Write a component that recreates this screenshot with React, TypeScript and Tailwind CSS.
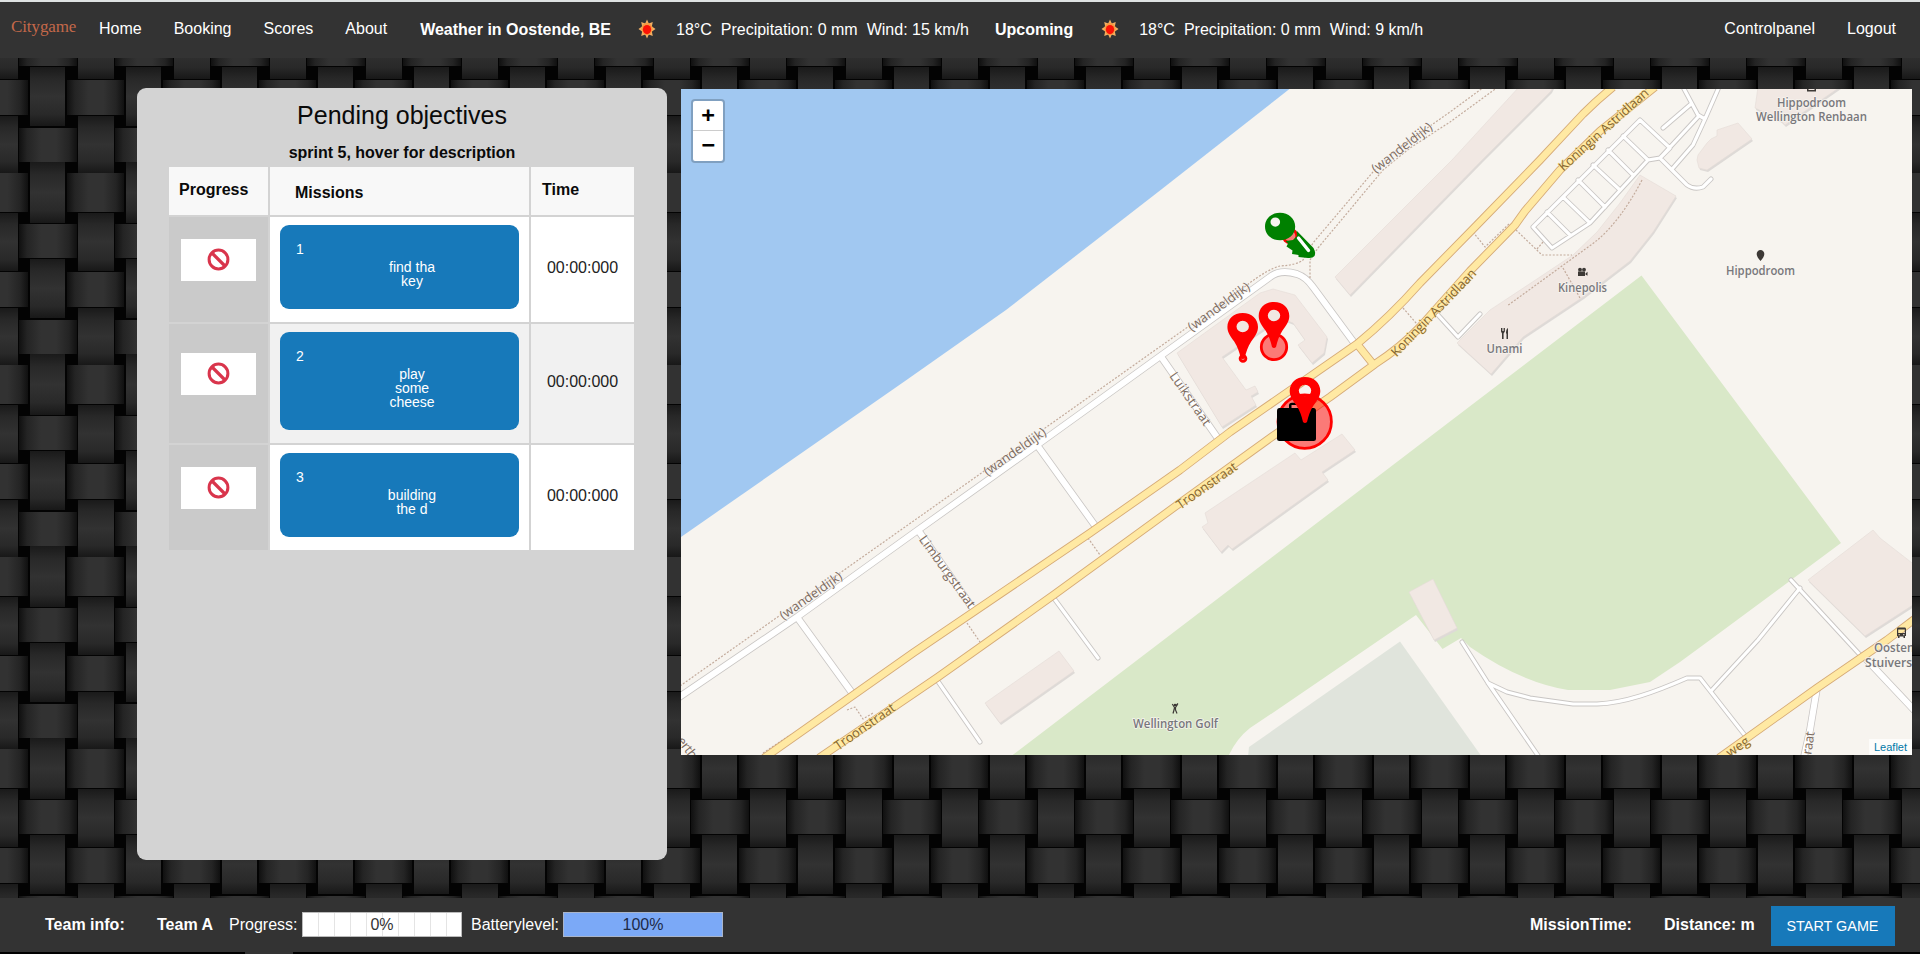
import React from "react";

const SANS = "font-['Liberation_Sans',Arial,sans-serif]";

function WeaveBackground() {
  return (
    <svg className="absolute inset-0" width="1920" height="954">
      <defs>
        <linearGradient id="hs" x1="0" x2="1" y1="0" y2="0">
          <stop offset="0" stopColor="#101010" />
          <stop offset="0.14" stopColor="#242424" />
          <stop offset="0.38" stopColor="#323232" />
          <stop offset="0.64" stopColor="#323232" />
          <stop offset="0.86" stopColor="#242424" />
          <stop offset="1" stopColor="#101010" />
        </linearGradient>
        <linearGradient id="vs" x1="0" x2="0" y1="0" y2="1">
          <stop offset="0" stopColor="#1a1a1a" />
          <stop offset="0.2" stopColor="#282828" />
          <stop offset="0.5" stopColor="#323232" />
          <stop offset="0.8" stopColor="#292929" />
          <stop offset="1" stopColor="#181818" />
        </linearGradient>
        <pattern id="weave" width="96" height="192" patternUnits="userSpaceOnUse">
          <rect width="96" height="192" fill="#030303" />
          <rect x="30" y="-30" width="35" height="61" fill="url(#vs)" />
          <rect x="30" y="67" width="35" height="59" fill="url(#vs)" />
          <rect x="30" y="162" width="35" height="61" fill="url(#vs)" />
          <rect x="78" y="21" width="36" height="58" fill="url(#vs)" />
          <rect x="-18" y="21" width="36" height="58" fill="url(#vs)" />
          <rect x="78" y="116" width="36" height="57" fill="url(#vs)" />
          <rect x="-18" y="116" width="36" height="57" fill="url(#vs)" />
          <rect x="19" y="32" width="58" height="34" fill="url(#hs)" />
          <rect x="19" y="128" width="58" height="34" fill="url(#hs)" />
          <rect x="67" y="80" width="57" height="35" fill="url(#hs)" />
          <rect x="-29" y="80" width="57" height="35" fill="url(#hs)" />
          <rect x="67" y="173" width="57" height="39" fill="url(#hs)" />
          <rect x="-29" y="173" width="57" height="39" fill="url(#hs)" />
          <rect x="67" y="-19" width="57" height="39" fill="url(#hs)" />
          <rect x="-29" y="-19" width="57" height="39" fill="url(#hs)" />
        </pattern>
      </defs>
      <rect width="1920" height="954" fill="url(#weave)" />
    </svg>
  );
}

function Sun() {
  return (
    <svg width="18" height="20" viewBox="-10 -10 20 20" preserveAspectRatio="none">
      <path
        d="M0-9.5 2-5.4 6.4-7 5.4-2.6 9.5 0 5.4 2.6 6.4 7 2 5.4 0 9.5-2 5.4-6.4 7-5.4 2.6-9.5 0-5.4-2.6-6.4-7-2-5.4Z"
        fill="#f3b066"
      />
      <circle r="6.2" fill="#f79a42" />
      <circle cy="0.6" r="4.6" fill="#fb1205" />
    </svg>
  );
}

function Header() {
  return (
    <header className="relative flex h-[58px] items-start border-t-2 border-[#dfe3e3] bg-[#333] text-[16px] leading-[18px] whitespace-pre text-white">
      <div className="mt-[16px] ml-[11px] w-[88px] font-['Liberation_Serif',serif] text-[17px] tracking-[-0.1px] text-[#c4694a]">Citygame</div>
      <nav className="mt-[18px] flex gap-[32px]">
        <a>Home</a>
        <a>Booking</a>
        <a>Scores</a>
        <a>About</a>
      </nav>
      <div className="mt-[19px] ml-[33px] flex">
        <b>Weather in Oostende, BE</b>
        <span className="-mt-[2px] mr-[20px] ml-[27px]"><Sun /></span>
        <span>18°C</span>
        <span className="ml-[9px]">Precipitation: 0 mm</span>
        <span className="ml-[9px]">Wind: 15 km/h</span>
        <b className="ml-[26px]">Upcoming</b>
        <span className="-mt-[2px] mr-[20px] ml-[28px]"><Sun /></span>
        <span>18°C</span>
        <span className="ml-[9px]">Precipitation: 0 mm</span>
        <span className="ml-[9px]">Wind: 9 km/h</span>
      </div>
      <nav className="mt-[18px] mr-[24px] ml-auto flex gap-[32px]">
        <a>Controlpanel</a>
        <a>Logout</a>
      </nav>
    </header>
  );
}

const missions = [
  { id: 1, lines: ["find tha", "key"], row: "h-[107px]", cell: "bg-white" },
  { id: 2, lines: ["play", "some", "cheese"], row: "h-[121px]", cell: "bg-[#f1f1f1]" },
  { id: 3, lines: ["building", "the d"], row: "h-[107px]", cell: "bg-white" },
];

function Objectives() {
  return (
    <section className="ml-[137px] h-[772px] w-[530px] rounded-[9px] bg-[#d3d3d3] px-[32px] text-[#0a0a0a]">
      <h1 className="mt-[12px] text-center text-[25px] leading-[30px]">Pending objectives</h1>
      <p className="mt-[14px] text-center text-[16px] leading-[18px] font-bold">sprint 5, hover for description</p>
      <div className="mt-[5px] w-[465px]">
        <div className="grid h-[48px] grid-cols-[99px_259px_103px] gap-x-[2px] text-[16px] leading-[18px] font-bold">
          <div className="bg-[#f8f8f8] pt-[14px] pl-[10px]">Progress</div>
          <div className="bg-[#f8f8f8] pt-[17px] pl-[25px]">Missions</div>
          <div className="bg-[#f8f8f8] pt-[14px] pl-[11px]">Time</div>
        </div>
        {missions.map((m) => (
          <div key={m.id} className={`grid grid-cols-[99px_259px_103px] gap-x-[2px] pt-[2px] ${m.row}`}>
            <div className="flex items-center bg-[#cacaca] pb-[19px] pl-[12px]">
              <div className="flex h-[42px] w-[75px] items-center justify-center bg-white">
                <svg width="23" height="23" viewBox="0 0 23 23" className="mb-[1px]">
                  <circle cx="11.5" cy="11.5" r="9.4" fill="none" stroke="#d9354c" strokeWidth="3" />
                  <path d="M5 5 18 18" stroke="#d9354c" strokeWidth="3.2" />
                </svg>
              </div>
            </div>
            <div className={`px-[10px] pt-[8px] pb-[13px] ${m.cell}`}>
              <div className="h-full rounded-[9px] bg-[#1779ba] pt-[17px] text-[14px] leading-[14px] text-white">
                <div className="pl-[16px]">{m.id}</div>
                <div className="mt-[4px] ml-[25px] text-center">
                  {m.lines.map((l) => (
                    <div key={l}>{l}</div>
                  ))}
                </div>
              </div>
            </div>
            <div className={`flex items-center justify-center pb-[3px] text-[16px] leading-[18px] text-[#222] ${m.cell}`}>00:00:000</div>
          </div>
        ))}
      </div>
    </section>
  );
}

const buildings = [
  "1335,277 1452,160 1519,87 1553,87 1551,91 1482,160 1350,295",
  "1177,353 1260,293 1273,289 1295,295 1327,337 1324,353 1312,363 1298,345 1305,340 1293,323 1280,318 1222,357 1246,390 1255,386 1258,392 1251,396 1256,405 1222,427",
  "1640,175 1676,196 1653,232 1630,261 1583,297 1523,337 1491,374 1457,343 1490,310 1540,277 1573,255 1597,232 1620,203",
  "1717,130 1738,123 1752,139 1707,170 1699,168 1697,160 1698,155 1707,143 1711,139 1717,136",
  "1755,108 1758,87 1840,87 1785,125 1781,121 1768,114",
  "1205,513 1295,453 1301,460 1342,434 1355,450 1322,472 1328,480 1232,549 1228,545 1221,552 1202,527 1208,523",
  "985,703 1059,651 1074,671 1000,723",
  "1409,592 1433,579 1457,628 1434,640",
  "1808,580 1873,530 1880,538 1916,566 1916,603 1865,636",
];

const serviceRoads = [
  "M1053 597 1098 658",
  "M937 680 980 742",
  "M1438 315 1458 337 1480 314",
  "M1640 120 1670 148 1660 158 1648 160 1590 223 1552 248 1533 227Z",
  "M1623 136 1648 160",
  "M1608 150 1633 175",
  "M1593 165 1620 190",
  "M1578 180 1605 207",
  "M1563 197 1590 223",
  "M1547 212 1570 235",
  "M1660 158 1698 117",
  "M1683 87 1698 115 1705 119 1719 87",
  "M1691 104 1663 128",
  "M1705 119 1693 145 1673 168",
  "M1660 158 1687 185Q1694 190 1703 187L1711 179",
  "M1462 642 1488 683 1539 757",
  "M1488 683 1507 692 1530 698 1573 704 1597 704C1625 703 1655 692 1687 678L1700 678 1747 738",
  "M1712 690 1758 640 1800 588",
  "M1791 580 1862 657",
];

const streets = [
  "M678 698 797 617 918 530 1037 445 1130 378 1270 277Q1280 269 1297 274Q1306 277 1313 287L1355 344",
  "M797 617 855 697",
  "M918 530 976 613",
  "M1037 445 1096 527",
  "M1162 358 1219 440",
  "M1866 659 1916 712",
  "M1817 688 1810 730 1804 757",
];

const mainRoads = [
  "M764 758 913 653 1090 533 1180 470 1230 432 1357 344Q1390 317 1420 283L1473 229 1540 160 1583 114Q1597 100 1613 87",
  "M819 758 938 677 1055 594 1180 503 1273 436 1330 397 1375 364Q1400 348 1420 327L1470 271 1515 225 1525 211 1560 170 1600 131 1655 87",
  "M1357 344 1373 364",
  "M1719 758 1817 688 1887 640 1916 618",
];

const paths = [
  "M680 686 1113 380 1247 285Q1268 269 1280 266 1297 265 1303 260L1313 243 1373 172 1400 147 1450 112 1484 87",
  "M1310 278 1310 260 1318 248 1383 170 1410 148 1450 122 1498 87",
  "M1473 232 1485 247 1510 223",
  "M1516 230 1542 255 1572 255M1537 249 1543 242",
  "M1642 180Q1620 222 1595 242L1507 306M1563 268 1580 298",
  "M1403 308 1417 324M1088 538 1100 555M967 623 980 642",
  "M847 710 855 707 863 719 873 713M763 753 790 735 797 736",
];

type RoadLabel = [string, number, number, number, number];
const roadLabels: RoadLabel[] = [
  ["(wandeldijk)", 811, 596, -35, 73],
  ["(wandeldijk)", 1015, 452, -35, 73],
  ["(wandeldijk)", 1219, 307, -36, 73],
  ["(wandeldijk)", 1402, 148, -38, 73],
  ["Limburgstraat", 947, 572, 54, 86],
  ["Luikstraat", 1190, 399, 55, 62],
  ["erth", 687, 748, 52, 24],
  ["raat", 1809, 743, -82, 23],
];
const mainLabels: RoadLabel[] = [
  ["Troonstraat", 865, 727, -35, 71],
  ["Troonstraat", 1207, 486, -35, 71],
  ["Koningin Astridlaan", 1434, 313, -46, 116],
  ["Koningin Astridlaan", 1604, 130, -42, 116],
  ["weg", 1738, 747, -35, 25],
];

const places: [string, number, number, number][] = [
  ["Hippodroom", 1760.5, 274.5, 69],
  ["Kinepolis", 1582.5, 292, 49],
  ["Unami", 1504.5, 352.5, 36],
  ["Wellington Golf", 1175.5, 728, 85],
  ["Hippodroom", 1811.5, 106.5, 69],
  ["Wellington Renbaan", 1811.5, 121, 111],
];

function Labels({ items, fill, halo }: { items: RoadLabel[]; fill: string; halo: string }) {
  return (
    <g fontSize="13" fill={fill} stroke={halo} strokeWidth="1" paintOrder="stroke" textAnchor="middle">
      {items.map(([t, x, y, a, w], i) => (
        <text key={i} transform={`translate(${x} ${y}) rotate(${a})`} y="4" textLength={w}>
          {t}
        </text>
      ))}
    </g>
  );
}

function Pin({ x, y }: { x: number; y: number }) {
  return (
    <path
      transform={`translate(${x} ${y})`}
      fill="#f00"
      fillRule="evenodd"
      d="M0-14.5C9-14.5 15.3-8.5 15.3-.5 15.3 5 12 9 8.5 14 5 19.5 3.5 24 2 30.500Q0 32.500-2 30.500C-3.500 24-5 19.500-8.500 14-12 9-15.300 5-15.300-.5-15.300-8.500-9-14.500 0-14.500ZM0-6.800A6.200 5.800 0 1 0 0 4.800 6.200 5.800 0 1 0 0-6.800Z"
    />
  );
}

function GameMap() {
  return (
    <section className="relative mt-[1px] ml-[14px] h-[666px] w-[1231px] overflow-hidden bg-[#f7f4ef]">
      <svg width="1231" height="666" viewBox="681 89 1231 666" className="block font-['Open_Sans','Noto_Sans',sans-serif]">
        <path d="M681 87H1292L1160 190.500 1006 310 906.500 380 681 537Z" fill="#a1c8f1" />
        <path
          d="M1641.500 275.500 1841 543 1710 640 1680 662 1650 682 1610 690H1568Q1520 682 1470 647L1461 638 1442.500 649 1416 615 1277 710 1250 728Q1236 739 1228 757H1010Z"
          fill="#d9e8c8"
        />
        <path d="M1400 641.500 1249 747 1248 757H1482Z" fill="#e0e4dc" />
        <g strokeLinejoin="round">
          {buildings.map((p) => (
            <g key={p}>
              <polygon points={p} fill="#dedad7" transform="translate(1 2)" />
              <polygon points={p} fill="#f1e8e3" stroke="#e4dbd6" strokeWidth="0.6" />
            </g>
          ))}
        </g>
        <g fill="none" strokeLinejoin="round">
          <path d={serviceRoads.join("")} stroke="#c9c6c4" strokeWidth="5" strokeLinecap="round" />
          <path d={streets.join("")} stroke="#c9c6c4" strokeWidth="7.600" />
          <path d={serviceRoads.join("")} stroke="#fff" strokeWidth="3.200" strokeLinecap="round" />
          <path d={streets.join("")} stroke="#fff" strokeWidth="6" />
          <path d={paths.join("")} stroke="#c3ab9c" strokeWidth="1.200" strokeDasharray="2 1.600" />
          <path d={mainRoads.join("")} stroke="#d6ab78" strokeWidth="8.400" />
          <path d={mainRoads.join("")} stroke="#ffe9a3" strokeWidth="6.600" />
        </g>
        <Labels items={roadLabels} fill="#7c6a5e" halo="#f9f7f3" />
        <Labels items={mainLabels} fill="#85652f" halo="#ffe9a3" />
        <g fontSize="12" fontWeight="600" fill="#77777b" stroke="#f7f4ef" strokeWidth="1.500" paintOrder="stroke" textAnchor="middle">
          {places.map(([t, x, y, w], i) => (
            <text key={i} x={x} y={y} textLength={w} lengthAdjust="spacingAndGlyphs">
              {t}
            </text>
          ))}
          <g textAnchor="start">
            <text x="1874" y="652" textLength="54" lengthAdjust="spacingAndGlyphs">Oostende</text>
            <text x="1865" y="666.500" textLength="76" lengthAdjust="spacingAndGlyphs">Stuiverstraat</text>
          </g>
        </g>
        <g fill="#3d3936">
          <path d="M1760.500 250A3.800 3.800 0 0 1 1764.300 254Q1764.300 257 1760.500 261 1756.700 257 1756.700 254A3.800 3.800 0 0 1 1760.500 250Z" />
          <path d="M1578 271.500H1585V276H1578ZM1585.500 273.500 1587.500 271.800V275.800L1585.500 274.500Z" />
          <circle cx="1580" cy="269.700" r="1.900" />
          <circle cx="1584" cy="269.700" r="1.900" />
          <path d="M1501 328H1502V331H1502.600V328H1503.400V331H1504V328H1504.900V331.500L1503.600 333.500V339H1502V333.500L1501 331.500ZM1508 328V339H1506.500V334L1506 333Q1506 329 1508 328Z" />
          <circle cx="1175" cy="705" r="1.300" />
          <path
            d="M1178 703.500 1175.500 706M1172.300 704 1174.500 707.500 1174 710 1173 713.500M1177.500 704.500 1175.500 707.500 1175.500 710 1177 713.500"
            fill="none"
            stroke="#3d3936"
            strokeWidth="1.200"
          />
          <path d="M1807 87H1816V91.500H1807ZM1808.500 87V90H1814.500V87Z" fillRule="evenodd" />
          <path
            fillRule="evenodd"
            d="M1898 627.500H1905Q1906 627.500 1906 629V636H1905V638H1903.500V636.500H1899.500V638H1898V636H1897V629Q1897 627.500 1898 627.500ZM1898.200 629.500V633H1904.800V629.500ZM1898.500 634.200V635.300H1900V634.200ZM1903 634.200V635.300H1904.500V634.200Z"
          />
        </g>

        <g fill="#f00" fillOpacity="0.5" stroke="#f00" strokeWidth="2.800">
          <circle cx="1290" cy="236" r="6.800" />
          <circle cx="1243" cy="358.500" r="2.900" />
          <circle cx="1274" cy="347" r="12.700" />
          <circle cx="1304.700" cy="421.700" r="26.700" />
        </g>
        <path
          fillRule="evenodd"
          fill="#000"
          d="M1279.500 408H1289V405.500Q1289 402.700 1292 402.700H1301Q1304 402.700 1304 405.500V408H1313.500Q1316 408 1316 411V438.500Q1316 441 1313.500 441H1279.500Q1277 441 1277 438.500V411Q1277 408 1279.500 408ZM1291.500 408H1301.500V405H1291.500Z"
        />
        <Pin x={1242.7} y={327.5} />
        <Pin x={1274} y={316.5} />
        <Pin x={1305} y={391.5} />
        <path
          fill="green"
          fillRule="evenodd"
          d="M1280 212.700C1288.500 212.700 1295.200 218.500 1295.200 226.500 1295.200 234.500 1288.500 240.300 1280 240.300 1271.500 240.300 1265 234.500 1265 226.500 1265 218.500 1271.500 212.700 1280 212.700ZM1275.300 217.500A4.800 4.600 0 1 0 1275.300 226.700 4.800 4.600 0 1 0 1275.300 217.500Z"
        />
        <path
          fill="green"
          d="M1296.500 230.500 1313.500 248Q1316 252.500 1314.500 256 1312.500 258.500 1308 258L1298.500 257 1298.500 255 1295.500 254.500 1292 254 1292.500 250.500 1286.500 246.500 1288 243.500 1285.500 241 1293 240 1297 236Z"
        />
        <path d="M1298.500 238 1308.500 250.500" stroke="#fff" strokeWidth="3.400" strokeLinecap="round" />
      </svg>

      <div className="absolute top-[10px] left-[10px] w-[34px] overflow-hidden rounded-[4px] border-2 border-black/20 bg-white bg-clip-padding text-center font-['DejaVu_Sans_Mono',monospace] text-[22px] leading-[28px] font-bold text-black">
        <div className="h-[30px] border-b border-[#ccc]">+</div>
        <div className="h-[30px]">−</div>
      </div>
      <div className="absolute right-0 bottom-0 bg-white/70 px-[5px] text-[11px] leading-[16px] text-[#0078a8]">Leaflet</div>
    </section>
  );
}

function Footer() {
  return (
    <footer className="relative flex h-[56px] items-start border-b-2 border-black bg-[#333] text-[16px] leading-[18px] whitespace-pre text-white">
      <b className="mt-[18px] ml-[45px] w-[112px]">Team info:</b>
      <b className="mt-[18px] w-[72px]">Team A</b>
      <span className="mt-[18px] w-[73px]">Progress:</span>
      <div className="relative mt-[14px] flex h-[25px] w-[160px] border border-[#bbb] bg-white text-[#333]">
        {Array.from({ length: 9 }, (_, i) => (
          <span key={i} className="ml-[15px] w-px bg-[#e4e4e4]" />
        ))}
        <span className="absolute inset-0 pt-[3px] text-center">0%</span>
      </div>
      <span className="mt-[18px] ml-[9px] w-[92px]">Batterylevel:</span>
      <div className="mt-[14px] h-[25px] w-[160px] border border-[#a9b4c9] bg-[#7ba9f7] pt-[3px] text-center text-[#1d2b48]">100%</div>
      <b className="mt-[18px] ml-auto w-[134px]">MissionTime:</b>
      <b className="mt-[18px] w-[107px]">Distance: m</b>
      <button className="mt-[8px] mr-[25px] h-[40px] w-[124px] bg-[#1779ba] pr-[1px] text-[14.4px]">START GAME</button>
      <div className="absolute top-[54px] left-[245px] h-[2px] w-[48px] bg-[#333]" />
    </footer>
  );
}

export default function App() {
  return (
    <div className={`relative flex h-[954px] w-[1920px] flex-col overflow-hidden bg-black ${SANS}`}>
      <WeaveBackground />
      <Header />
      <main className="relative flex flex-1 items-start pt-[30px]">
        <Objectives />
        <GameMap />
      </main>
      <Footer />
    </div>
  );
}
